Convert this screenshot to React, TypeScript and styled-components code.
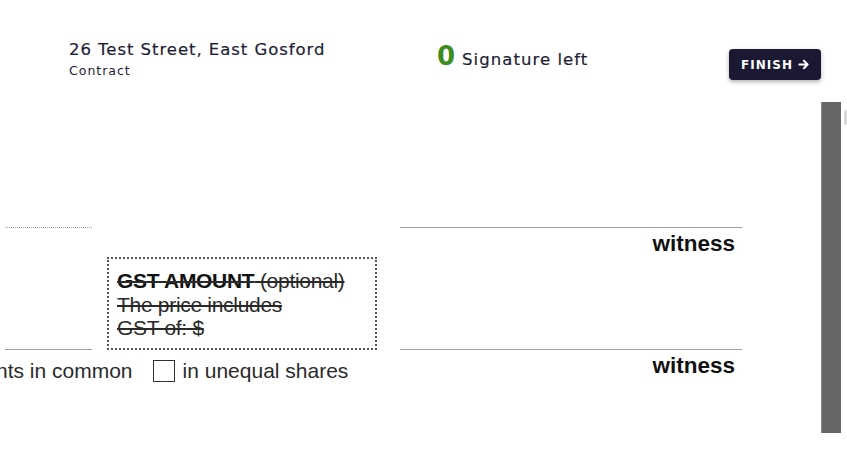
import React from 'react';
import styled, { createGlobalStyle } from 'styled-components';

const GlobalStyle = createGlobalStyle`
  html, body {
    margin: 0;
    padding: 0;
    background: #fff;
  }
  body {
    width: 847px;
    height: 469px;
    overflow: hidden;
  }
`;

const Root = styled.div`
  width: 847px;
  height: 469px;
  display: flex;
  flex-direction: column;
  overflow: hidden;
  background: #fff;
`;

const Header = styled.header`
  height: 102px;
  flex: none;
  display: flex;
  align-items: flex-start;
  padding: 39px 26px 0 69px;
  box-sizing: border-box;
  font-family: 'DejaVu Sans', sans-serif;
  color: #1f1d36;
`;

const TitleBlock = styled.div`
  width: 368px;
  display: flex;
  flex-direction: column;
`;

const Title = styled.div`
  font-size: 16.5px;
  line-height: 22px;
  letter-spacing: 0.95px;
  -webkit-text-stroke: 0.2px #1f1d36;
`;

const Subtitle = styled.div`
  font-size: 12.5px;
  line-height: 16px;
  letter-spacing: 1px;
  margin-top: 2px;
`;

const Counter = styled.div`
  display: flex;
  align-items: baseline;
  gap: 7px;
  margin-top: 3px;
  font-size: 16.5px;
  letter-spacing: 1.05px;
  -webkit-text-stroke: 0.2px #1f1d36;
`;

const Count = styled.span`
  color: #3d8c1e;
  font-size: 26px;
  font-weight: 700;
  line-height: 28px;
  letter-spacing: 0;
  -webkit-text-stroke: 0;
`;

const FinishButton = styled.button`
  margin-left: auto;
  margin-top: 10px;
  height: 31px;
  width: 92px;
  border: none;
  border-radius: 4px;
  background: #1b1834;
  color: #fff;
  font-family: 'DejaVu Sans', sans-serif;
  font-size: 12px;
  font-weight: 700;
  letter-spacing: 1px;
  display: flex;
  align-items: center;
  justify-content: center;
  gap: 5px;
  box-shadow: 0 2px 4px rgba(0, 0, 0, 0.3);
  padding: 0;
`;

const Body = styled.div`
  flex: 1;
  display: flex;
`;

const Document = styled.div`
  width: 821px;
  flex: none;
  display: flex;
  overflow: hidden;
  font-family: 'Liberation Sans', Arial, sans-serif;
  color: #222;
`;

const LeftColumn = styled.div`
  width: 400px;
  flex: none;
  display: flex;
  flex-direction: column;
  padding-top: 125px;
`;

const RightColumn = styled.div`
  width: 342px;
  flex: none;
  display: flex;
  flex-direction: column;
  padding-top: 125px;
`;

const Rule = styled.div<{ $dotted?: boolean; $width?: number }>`
  width: ${p => (p.$width ? `${p.$width}px` : '100%')};
  border-top: 1px ${p => (p.$dotted ? 'dotted' : 'solid')} #a0a0a0;
`;

const RuleRow = styled.div<{ $top: number }>`
  display: flex;
  align-items: flex-end;
  padding-left: 5px;
  margin-top: ${p => p.$top}px;
`;

const GstBox = styled.div`
  margin-left: 15px;
  width: 270px;
  height: 93px;
  box-sizing: border-box;
  border: 2px dotted #555;
  padding: 10px 0 0 8px;
  font-size: 21px;
  line-height: 23.5px;
  letter-spacing: -0.3px;
  text-decoration: line-through;
  color: #2a2a2a;
  white-space: nowrap;
`;

const Strong = styled.b`
  font-weight: 700;
  color: #111;
`;

const OptionRow = styled.div`
  display: flex;
  align-items: center;
  margin-top: 10px;
  font-size: 21px;
  line-height: 22px;
  white-space: nowrap;
  color: #2a2a2a;
`;

const Clipped = styled.span`
  margin-left: -4px;
`;

const Checkbox = styled.span`
  width: 20px;
  height: 20px;
  border: 1.5px solid #333;
  margin: 0 8px 0 20px;
  flex: none;
`;

const Witness = styled.div<{ $gap: number }>`
  text-align: right;
  padding-right: 7px;
  margin-top: 5px;
  margin-bottom: ${p => p.$gap}px;
  font-size: 22.5px;
  font-weight: 700;
  line-height: 22px;
  color: #111;
`;

const ScrollTrack = styled.div`
  width: 19px;
  height: 331px;
  background: #666;
  flex: none;
  border-left: 1px solid #888;
`;

const ScrollThumb = styled.div`
  width: 4px;
  height: 15px;
  margin: 8px 0 0 3px;
  border-radius: 2px;
  background: #d8d8d8;
`;

export default function App() {
  return (
    <Root>
      <GlobalStyle />
      <Header>
        <TitleBlock>
          <Title>26 Test Street, East Gosford</Title>
          <Subtitle>Contract</Subtitle>
        </TitleBlock>
        <Counter>
          <Count>0</Count>
          <span>Signature left</span>
        </Counter>
        <FinishButton>
          FINISH
          <svg width="11" height="11" viewBox="0 0 12 12" fill="none" stroke="#fff" strokeWidth="2.2" strokeLinecap="round" strokeLinejoin="round">
            <path d="M1.5 6h9M6.5 2l4 4-4 4" />
          </svg>
        </FinishButton>
      </Header>
      <Body>
        <Document>
          <LeftColumn>
            <RuleRow $top={0}>
              <Rule $dotted $width={87} />
            </RuleRow>
            <RuleRow $top={29}>
              <Rule $width={87} />
              <GstBox>
                <Strong>GST AMOUNT</Strong> (optional)
                <br />
                The price includes
                <br />
                GST of: $
              </GstBox>
            </RuleRow>
            <OptionRow>
              <Clipped>nts in common</Clipped>
              <Checkbox />
              <span>in unequal shares</span>
            </OptionRow>
          </LeftColumn>
          <RightColumn>
            <Rule />
            <Witness $gap={94}>witness</Witness>
            <Rule />
            <Witness $gap={0}>witness</Witness>
          </RightColumn>
        </Document>
        <ScrollTrack />
        <ScrollThumb />
      </Body>
    </Root>
  );
}
